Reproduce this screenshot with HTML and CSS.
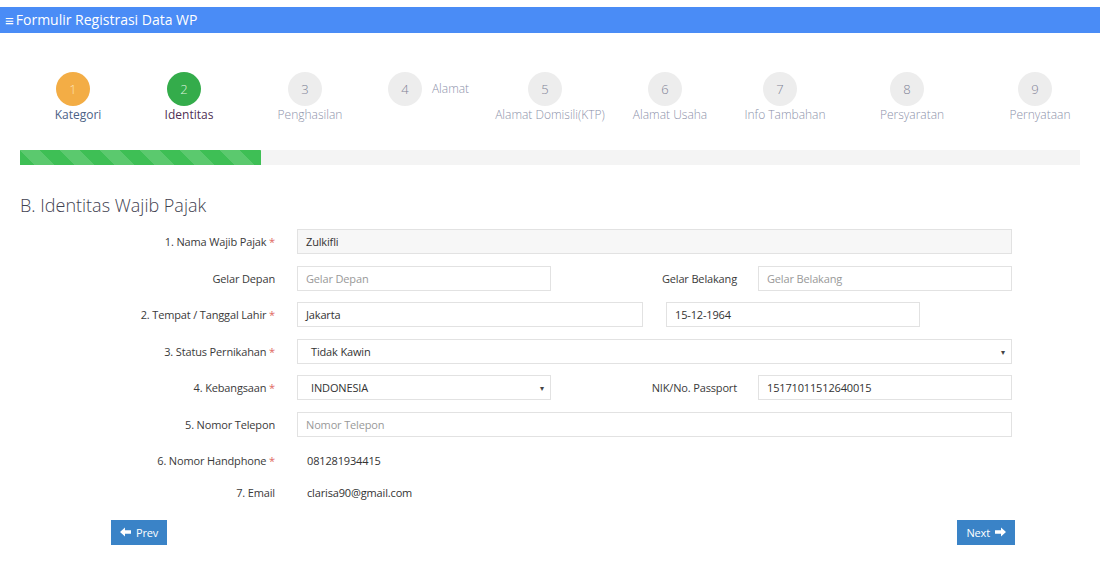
FILE: index.html
```html
<!DOCTYPE html>
<html>
<head>
<meta charset="utf-8">
<link rel="stylesheet" href="styles.css">
</head>
<body>
<div class="topbar"><span class="burger">&#8801;</span>Formulir Registrasi Data WP</div>

<div class="steps">
  <div class="step s1"><div class="circle done">1</div><div class="slabel lbl-done">Kategori</div></div>
  <div class="step s2"><div class="circle active">2</div><div class="slabel lbl-active">Identitas</div></div>
  <div class="step s3"><div class="circle">3</div><div class="slabel">Penghasilan</div></div>
  <div class="step s4 inline"><div class="circle">4</div><div class="slabel">Alamat</div></div>
  <div class="step s5"><div class="circle">5</div><div class="slabel">Alamat Domisili(KTP)</div></div>
  <div class="step s6"><div class="circle">6</div><div class="slabel">Alamat Usaha</div></div>
  <div class="step s7"><div class="circle">7</div><div class="slabel">Info Tambahan</div></div>
  <div class="step s8"><div class="circle">8</div><div class="slabel">Persyaratan</div></div>
  <div class="step s9"><div class="circle">9</div><div class="slabel">Pernyataan</div></div>
</div>

<div class="progress"><div class="bar" style="width:22.7%"></div></div>

<h2 class="title">B. Identitas Wajib Pajak</h2>

<div class="form">
  <div class="row">
    <label class="lbl">1. Nama Wajib Pajak <span class="req">*</span></label>
    <div class="ctrl full disabled">Zulkifli</div>
  </div>
  <div class="row">
    <label class="lbl">Gelar Depan</label>
    <div class="ctrl half ph">Gelar Depan</div>
    <label class="lbl2">Gelar Belakang</label>
    <div class="ctrl half ph">Gelar Belakang</div>
  </div>
  <div class="row">
    <label class="lbl">2. Tempat / Tanggal Lahir <span class="req">*</span></label>
    <div class="ctrl wide">Jakarta</div>
    <div class="ctrl half date">15-12-1964</div>
  </div>
  <div class="row">
    <label class="lbl">3. Status Pernikahan <span class="req">*</span></label>
    <div class="ctrl full select"><span>Tidak Kawin</span><span class="caret">&#9662;</span></div>
  </div>
  <div class="row">
    <label class="lbl">4. Kebangsaan <span class="req">*</span></label>
    <div class="ctrl half select"><span>INDONESIA</span><span class="caret">&#9662;</span></div>
    <label class="lbl2">NIK/No. Passport</label>
    <div class="ctrl half">15171011512640015</div>
  </div>
  <div class="row">
    <label class="lbl">5. Nomor Telepon</label>
    <div class="ctrl full ph">Nomor Telepon</div>
  </div>
  <div class="row static first">
    <label class="lbl">6. Nomor Handphone <span class="req">*</span></label>
    <div class="value">081281934415</div>
  </div>
  <div class="row static">
    <label class="lbl">7. Email</label>
    <div class="value">clarisa90@gmail.com</div>
  </div>
</div>

<div class="buttons">
  <button class="btn"><svg width="11" height="10" viewBox="0 0 11 10"><path d="M0 5 L5 0.5 L5 3.3 L11 3.3 L11 6.7 L5 6.7 L5 9.5 Z" fill="#fff"/></svg>Prev</button>
  <button class="btn">Next<svg width="11" height="10" viewBox="0 0 11 10"><path d="M11 5 L6 0.5 L6 3.3 L0 3.3 L0 6.7 L6 6.7 L6 9.5 Z" fill="#fff"/></svg></button>
</div>
</body>
</html>
```
FILE: styles.css
```css
html { overflow-x: hidden; }
body {
  margin: 0;
  padding-top: 7px;
  font-family: "Open Sans", "Liberation Sans", sans-serif;
  color: #333;
  background: #fff;
}
.topbar {
  height: 26px;
  background: #4a8cf6;
  color: #fff;
  font-size: 14px;
  line-height: 24px;
  padding-left: 5px;
  display: flex;
  align-items: center;
}
.burger { font-size: 15px; margin-right: 2px; font-weight: bold; }

.steps {
  display: flex;
  padding-left: 20px;
  margin-top: 39px;
  height: 78px;
}
.step {
  display: flex;
  flex-direction: column;
  align-items: center;
  flex: none;
}
.step.inline { flex-direction: row; align-items: flex-start; justify-content: center; }
.step.inline .circle { margin-right: 10px; }
.step.inline .slabel { margin-top: 9px; }
.s1 { width: 116px; }
.s2 { width: 106px; }
.s3 { width: 136px; }
.s4 { width: 101px; }
.s5 { width: 142px; }
.s6 { width: 98px; }
.s7 { width: 132px; }
.s8 { width: 122px; }
.s9 { width: 134px; }
.circle {
  width: 34px;
  height: 34px;
  border-radius: 50%;
  background: #ededed;
  color: #7f8396;
  font-size: 13px;
  font-weight: 300;
  display: flex;
  align-items: center;
  justify-content: center;
  margin-right: 10px;
}
.circle.done { background: #f3ad45; color: #fde2b8; }
.circle.active { background: #34ac4b; color: #d8f0dc; }
.slabel {
  font-size: 12px;
  color: #8d92aa;
  font-weight: 300;
  margin-top: 1px;
  white-space: nowrap;
  line-height: 16px;
}
.lbl-done { color: #4c6286; font-weight: 400; }
.lbl-active { color: #4f2f55; font-weight: 400; }

.progress {
  margin: 0 20px;
  height: 15px;
  background: #f4f4f4;
}
.bar {
  height: 100%;
  background-color: #3ebf55;
  background-image: linear-gradient(45deg, rgba(255,255,255,.15) 25%, transparent 25%, transparent 50%, rgba(255,255,255,.15) 50%, rgba(255,255,255,.15) 75%, transparent 75%, transparent);
  background-size: 40px 40px;
}

.title {
  margin: 28px 0 0 20px;
  font-size: 18px;
  font-weight: 300;
  color: #3f4250;
  line-height: 24px;
}

.form {
  margin-top: 12px;
  display: flex;
  flex-direction: column;
  gap: 11.6px;
  font-size: 11px;
  letter-spacing: -0.15px;
}
.row {
  display: flex;
  align-items: center;
  padding-left: 20px;
  height: 25px;
}
.lbl {
  width: 277px;
  padding-right: 22px;
  box-sizing: border-box;
  text-align: right;
  flex: none;
  color: #3a3a3a;
}
.req { color: #e0665f; }
.lbl2 {
  width: 207px;
  padding-right: 21px;
  box-sizing: border-box;
  text-align: right;
  flex: none;
  color: #3a3a3a;
}
.ctrl {
  height: 25px;
  box-sizing: border-box;
  border: 1px solid #e2e2e2;
  padding: 0 8px;
  line-height: 23px;
  color: #333;
  flex: none;
  background: #fff;
}
.ctrl.full { width: 715px; }
.ctrl.half { width: 254px; }
.ctrl.wide { width: 346px; margin-right: 23px; }
.ctrl.disabled { background: #f7f7f7; }
.ctrl.ph { color: #999; }
.ctrl.select { display: flex; justify-content: space-between; padding: 0 6px 0 13px; }
.caret { font-size: 8px; color: #444; }
.row.static { height: 20px; }
.row.static.first { margin-top: 2.4px; }
.value { padding-left: 10px; color: #333; }

.buttons {
  display: flex;
  justify-content: space-between;
  padding: 0 85px 0 111px;
  margin-top: 17px;
}
.btn {
  height: 25px;
  border: none;
  background: #3a83c7;
  color: #fff;
  font-family: "Open Sans", "Liberation Sans", sans-serif;
  font-size: 11px;
  letter-spacing: -0.15px;
  padding: 0 9px;
  display: flex;
  align-items: center;
  gap: 5px;
}
```
